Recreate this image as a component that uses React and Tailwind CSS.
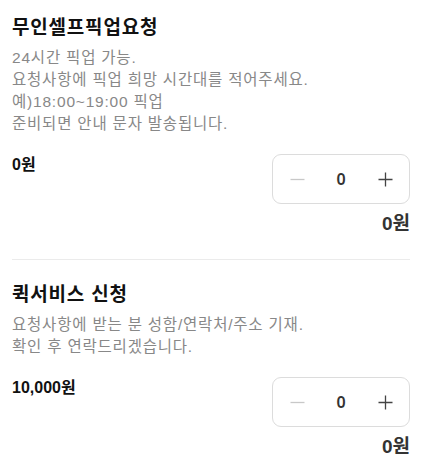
import { useState } from "react"

const options = [
  {
    id: "pickup",
    title: "무인셀프픽업요청",
    lines: [
      "24시간 픽업 가능.",
      "요청사항에 픽업 희망 시간대를 적어주세요.",
      "예)18:00~19:00 픽업",
      "준비되면 안내 문자 발송됩니다.",
    ],
    price: 0,
  },
  {
    id: "quick",
    title: "퀵서비스 신청",
    lines: ["요청사항에 받는 분 성함/연락처/주소 기재.", "확인 후 연락드리겠습니다."],
    price: 10000,
  },
]

const won = (n) => n.toLocaleString("ko-KR") + "원"

function Stepper({ value, onChange }) {
  return (
    <div className="flex h-[50px] w-[138px] items-center justify-between rounded-[9px] border border-[#dcdcdc] px-[16px]">
      <button
        type="button"
        onClick={() => onChange(Math.max(0, value - 1))}
        className="flex h-[16px] w-[16px] items-center justify-center"
      >
        <svg width="15" height="15" viewBox="0 0 15 15">
          <path d="M0.5 7.5h14" stroke="#c8c8c8" strokeWidth="1.3" />
        </svg>
      </button>
      <span className="font-['Noto_Sans',sans-serif] text-[16px] font-semibold text-[#333]">{value}</span>
      <button
        type="button"
        onClick={() => onChange(value + 1)}
        className="flex h-[16px] w-[16px] items-center justify-center"
      >
        <svg width="15" height="15" viewBox="0 0 15 15">
          <path d="M0.5 7.5h14M7.5 0.5v14" stroke="#444" strokeWidth="1.3" />
        </svg>
      </button>
    </div>
  )
}

function OptionRow({ option }) {
  const [qty, setQty] = useState(0)

  return (
    <section>
      <h3 className="text-[19px] font-bold leading-[26px] tracking-[0.8px] text-[#111]">{option.title}</h3>
      <p className="mt-[6px] text-[15.5px] leading-[22px] tracking-[0.8px] text-[#888]">
        {option.lines.map((line, i) => (
          <span key={i} className="block">
            {line}
          </span>
        ))}
      </p>
      <div className="mt-[19px] flex items-start justify-between">
        <span className="text-[16px] font-bold leading-[22px] text-[#111]">{won(option.price)}</span>
        <Stepper value={qty} onChange={setQty} />
      </div>
      <div className="mt-[7px] text-right text-[19px] font-bold leading-[26px] text-[#333]">
        {won(option.price * qty)}
      </div>
    </section>
  )
}

export default function App() {
  return (
    <div
      className="min-h-screen bg-white px-[12px] pt-[15px]"
      style={{ fontFamily: '"Liberation Sans", "Noto Sans CJK KR", sans-serif' }}
    >
      {options.map((option, i) => (
        <div key={option.id}>
          {i > 0 && <div className="mb-[22px] mt-[22px] h-px bg-[#ebebeb]" />}
          <OptionRow option={option} />
        </div>
      ))}
    </div>
  )
}
